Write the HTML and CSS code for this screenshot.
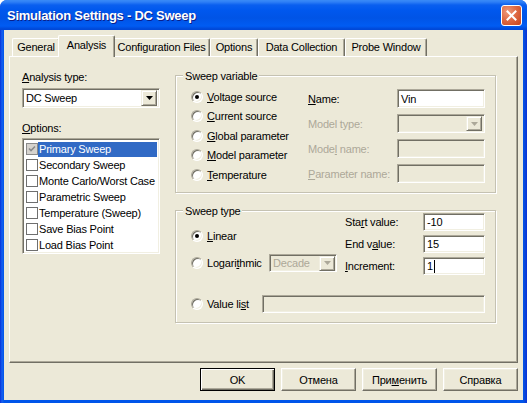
FILE: index.html
```html
<!DOCTYPE html>
<html>
<head>
<meta charset="utf-8">
<link rel="stylesheet" href="styles.css">
</head>
<body>
<div class="window">
  <div class="titlebar">
    <span class="title">Simulation Settings - DC Sweep</span>
    <div class="close"><svg width="11" height="11" viewBox="0 0 11 11"><path d="M1.5 1.5L9.5 9.5M9.5 1.5L1.5 9.5" stroke="#fff" stroke-width="2" stroke-linecap="square"/></svg></div>
  </div>
  <div class="client">
    <div class="tabs">
      <div class="tab w-gen">General</div>
      <div class="tab sel w-ana">Analysis</div>
      <div class="tab w-cfg">Configuration Files</div>
      <div class="tab w-opt">Options</div>
      <div class="tab w-dat">Data Collection</div>
      <div class="tab w-prb">Probe Window</div>
    </div>
    <div class="panel">
      <div class="leftcol">
        <div class="lbl lbl-a"><u>A</u>nalysis type:</div>
        <div class="combo sunken combo-a">
          <span class="ctext">DC Sweep</span>
          <span class="arrowbtn"><svg width="7" height="4" viewBox="0 0 7 4"><path d="M0 0H7L3.5 4Z" fill="#000"/></svg></span>
        </div>
        <div class="lbl lbl-o"><u>O</u>ptions:</div>
        <div class="listbox sunken">
          <div class="item"><span class="cb cb-on"><svg width="10" height="10" viewBox="0 0 10 10"><path d="M2 4.5L4 6.5L8 2.5" stroke="#8A8A8A" stroke-width="1.6" fill="none"/></svg></span><span class="itxt hl">Primary Sweep</span></div>
          <div class="item"><span class="cb"></span><span class="itxt">Secondary Sweep</span></div>
          <div class="item"><span class="cb"></span><span class="itxt">Monte Carlo/Worst Case</span></div>
          <div class="item"><span class="cb"></span><span class="itxt">Parametric Sweep</span></div>
          <div class="item"><span class="cb"></span><span class="itxt">Temperature (Sweep)</span></div>
          <div class="item"><span class="cb"></span><span class="itxt">Save Bias Point</span></div>
          <div class="item"><span class="cb"></span><span class="itxt">Load Bias Point</span></div>
        </div>
      </div>
      <div class="rightcol">
        <div class="group g1">
          <span class="legend">Sweep variable</span>
          <div class="radiocol">
            <div class="rrow"><span class="radio on"></span><span><u>V</u>oltage source</span></div>
            <div class="rrow"><span class="radio"></span><span><u>C</u>urrent source</span></div>
            <div class="rrow"><span class="radio"></span><span><u>G</u>lobal parameter</span></div>
            <div class="rrow"><span class="radio"></span><span><u>M</u>odel parameter</span></div>
            <div class="rrow"><span class="radio"></span><span><u>T</u>emperature</span></div>
          </div>
          <div class="fieldcol">
            <div class="frow"><span class="flabel"><u>N</u>ame:</span><span class="edit sunken">Vin</span></div>
            <div class="frow"><span class="flabel dis">Model type:</span><span class="edit sunken disbg combo-d"><span class="ctext"></span><span class="arrowbtn ab-small"><svg width="7" height="4" viewBox="0 0 7 4"><path d="M0 0H7L3.5 4Z" fill="#ACA899"/></svg></span></span></div>
            <div class="frow"><span class="flabel dis">Mode<u>l</u> name:</span><span class="edit sunken disbg"></span></div>
            <div class="frow"><span class="flabel dis"><u>P</u>arameter name:</span><span class="edit sunken disbg"></span></div>
          </div>
        </div>
        <div class="group g2">
          <span class="legend">Sweep type</span>
          <div class="top2">
            <div class="left2">
              <div class="rrow lin"><span class="radio on"></span><span><u>L</u>inear</span></div>
              <div class="rrow logr"><span class="radio"></span><span class="loglabel">Logari<u>t</u>hmic</span><span class="dcombo sunken disbg"><span class="ctext dis">Decade</span><span class="arrowbtn ab-small"><svg width="7" height="4" viewBox="0 0 7 4"><path d="M0 0H7L3.5 4Z" fill="#ACA899"/></svg></span></span></div>
            </div>
            <div class="right2">
              <div class="r2row"><span class="r2label">Sta<u>r</u>t value:</span><span class="edit2 sunken">-10</span></div>
              <div class="r2row"><span class="r2label">End v<u>a</u>lue:</span><span class="edit2 sunken">15</span></div>
              <div class="r2row"><span class="r2label"><u>I</u>ncrement:</span><span class="edit2 sunken">1<span class="caret"></span></span></div>
            </div>
          </div>
          <div class="vrow"><span class="radio"></span><span class="vlabel">Value li<u>s</u>t</span><span class="vedit sunken disbg"></span></div>
        </div>
      </div>
    </div>
    <div class="btnrow">
      <div class="btn def">OK</div>
      <div class="btn">Отмена</div>
      <div class="btn">При<u>м</u>енить</div>
      <div class="btn">Справка</div>
    </div>
  </div>
</div>
</body>
</html>
```
FILE: styles.css
```css
body {
  margin: 0;
  background: #fff;
  font-family: "Liberation Sans", Arial, sans-serif;
  font-size: 11px;
  letter-spacing: -0.2px;
  color: #000;
}
u { text-decoration: underline; text-underline-offset: 1px; }
.window {
  width: 527px;
  height: 403px;
  display: flex;
  flex-direction: column;
  background: linear-gradient(90deg, #0831D9 0, #1660F0 2px, #0055EA 4px, #0055EA 523px, #0A45D8 525px, #0831D9 527px);
  border-radius: 7px 7px 0 0;
  overflow: hidden;
}
.titlebar {
  height: 30px;
  flex: none;
  display: flex;
  align-items: center;
  padding: 0 5px 0 7px;
  background: linear-gradient(#3A8BF7 0, #2E7FF6 2px, #0A5FEF 5px, #0058EE 10px, #0054E6 18px, #005CF3 26px, #0048D8 29px, #0048D8 30px);
}
.title {
  flex: 1;
  color: #fff;
  font-weight: bold;
  font-size: 13px;
  letter-spacing: -0.25px;
  text-shadow: 1px 1px #0A1F8A;
}
.close {
  width: 21px;
  height: 21px;
  box-sizing: border-box;
  border: 1px solid #fff;
  border-radius: 3px;
  background: radial-gradient(circle at 30% 30%, #EE9A7C 0, #DF6B45 45%, #C8421A 100%);
  display: flex;
  align-items: center;
  justify-content: center;
}
.client {
  flex: 1;
  margin: 0 4px 3px;
  background: #ECE9D8;
  padding: 5px 5px 0;
  display: flex;
  flex-direction: column;
}
.tabs {
  height: 21px;
  flex: none;
  display: flex;
  align-items: flex-end;
  padding-left: 3px;
}
.tab {
  height: 18px;
  box-sizing: border-box;
  border-top: 1px solid #fff;
  border-left: 1px solid #fff;
  border-right: 1px solid #716F64;
  box-shadow: inset -1px 0 #ACA899;
  border-radius: 2px 2px 0 0;
  display: flex;
  align-items: center;
  justify-content: center;
  padding-bottom: 1px;
  background: #ECE9D8;
  white-space: nowrap;
}
.w-gen { width: 48px; }
.w-ana { width: 53px; }
.w-cfg { width: 97px; }
.w-opt { width: 48px; }
.w-dat { width: 87px; }
.w-prb { width: 82px; }
.tab.sel {
  width: 57px;
  height: 22px;
  margin: 0 -2px -1px;
  position: relative;
  z-index: 1;
  padding-bottom: 4px;
}
.panel {
  height: 307px;
  flex: none;
  box-sizing: border-box;
  border: 1px solid;
  border-color: #fff #716F64 #716F64 #fff;
  box-shadow: inset -1px -1px #ACA899;
  display: flex;
  gap: 15px;
  padding: 12px 0 0 12px;
}
.leftcol {
  width: 138px;
  display: flex;
  flex-direction: column;
}
.lbl { line-height: 13px; }
.lbl-a { margin-top: 2px; }
.lbl-o { margin-top: 14px; }
.sunken {
  box-sizing: border-box;
  border: 1px solid;
  border-color: #ACA899 #fff #fff #ACA899;
  box-shadow: inset 1px 1px #716F64, inset -1px -1px #F1EFE2;
  background: #fff;
}
.disbg { background: #ECE9D8; }
.dis { color: #ACA899; }
.combo {
  display: flex;
  align-items: center;
  padding: 2px;
}
.combo-a {
  margin-top: 4px;
  height: 20px;
}
.ctext {
  flex: 1;
  padding-left: 1px;
  white-space: nowrap;
}
.arrowbtn {
  width: 16px;
  height: 16px;
  flex: none;
  box-sizing: border-box;
  background: #ECE9D8;
  border: 1px solid;
  border-color: #F1EFE2 #716F64 #716F64 #F1EFE2;
  box-shadow: inset 1px 1px #fff, inset -1px -1px #ACA899;
  display: flex;
  align-items: center;
  justify-content: center;
}
.ab-small { height: 15px; }
.listbox {
  margin-top: 3px;
  height: 116px;
  padding: 2px;
}
.item {
  height: 16px;
  display: flex;
  align-items: center;
}
.cb {
  width: 12px;
  height: 12px;
  flex: none;
  box-sizing: border-box;
  margin-left: 1px;
  border: 1px solid #6F6F6F;
  background: #fff;
  display: flex;
  align-items: center;
  justify-content: center;
}
.cb-on { background: #D6D3CE; border-color: #8A8A8A; }
.itxt {
  flex: 1;
  line-height: 15px;
  padding-left: 1px;
  white-space: nowrap;
}
.hl { background: #316AC5; color: #fff; }
.rightcol {
  display: flex;
  flex-direction: column;
}
.group {
  position: relative;
  width: 321px;
  box-sizing: border-box;
  border: 1px solid #C5C2B2;
  box-shadow: inset 1px 1px #fff, 1px 1px #fff;
}
.legend {
  position: absolute;
  top: -6px;
  left: 7px;
  padding: 0 2px;
  background: #ECE9D8;
  line-height: 13px;
}
.g1 {
  margin-top: 6px;
  height: 118px;
  display: flex;
}
.g2 {
  margin-top: 17px;
  height: 113px;
}
.radiocol {
  width: 132px;
  box-sizing: border-box;
  padding: 11px 0 0 15px;
}
.rrow {
  height: 19.5px;
  display: flex;
  align-items: center;
  gap: 4px;
  white-space: nowrap;
}
.radio {
  width: 12px;
  height: 12px;
  flex: none;
  box-sizing: border-box;
  border-radius: 50%;
  border: 1px solid;
  border-color: #ACA899 #fff #fff #ACA899;
  box-shadow: inset 1px 1px #716F64, inset -1px -1px #F1EFE2;
  background: #fff;
  display: flex;
  align-items: center;
  justify-content: center;
}
.radio.on::after {
  content: "";
  width: 4px;
  height: 4px;
  border-radius: 50%;
  background: #000;
}
.fieldcol {
  padding-top: 13px;
  display: flex;
  flex-direction: column;
  gap: 6px;
}
.frow {
  height: 19px;
  display: flex;
  align-items: center;
}
.flabel { width: 89px; white-space: nowrap; }
.edit {
  width: 88px;
  height: 19px;
  padding-left: 3px;
  display: flex;
  align-items: center;
}
.combo-d { padding: 2px; }
.top2 { display: flex; }
.left2 {
  width: 169px;
  box-sizing: border-box;
  padding: 15px 0 0 15px;
}
.lin { height: 20px; }
.logr { height: 20px; margin-top: 7px; }
.loglabel { width: 58px; }
.dcombo {
  width: 68px;
  height: 18px;
  display: flex;
  align-items: center;
  padding: 2px 1px 2px 2px;
}
.right2 {
  padding-top: 2px;
  display: flex;
  flex-direction: column;
  gap: 4px;
}
.r2row {
  height: 18px;
  display: flex;
  align-items: center;
}
.r2label { width: 78px; white-space: nowrap; }
.edit2 {
  width: 62px;
  height: 18px;
  padding-left: 3px;
  display: flex;
  align-items: center;
}
.caret {
  width: 1px;
  height: 13px;
  background: #000;
  margin-left: 1px;
}
.vrow {
  height: 18px;
  margin-top: 20px;
  padding-left: 15px;
  display: flex;
  align-items: center;
  gap: 4px;
}
.vlabel { width: 51px; white-space: nowrap; }
.vedit { width: 223px; height: 18px; }
.btnrow {
  display: flex;
  justify-content: flex-end;
  gap: 6px;
  margin-top: 5px;
}
.btn {
  width: 75px;
  height: 23px;
  box-sizing: border-box;
  border: 1px solid;
  border-color: #fff #716F64 #716F64 #fff;
  box-shadow: inset -1px -1px #ACA899, inset 1px 1px #F1EFE2;
  display: flex;
  align-items: center;
  justify-content: center;
}
.btn.def {
  border-color: #000;
  box-shadow: inset 1px 1px #fff, inset -1px -1px #716F64, inset -2px -2px #ACA899;
}
```
